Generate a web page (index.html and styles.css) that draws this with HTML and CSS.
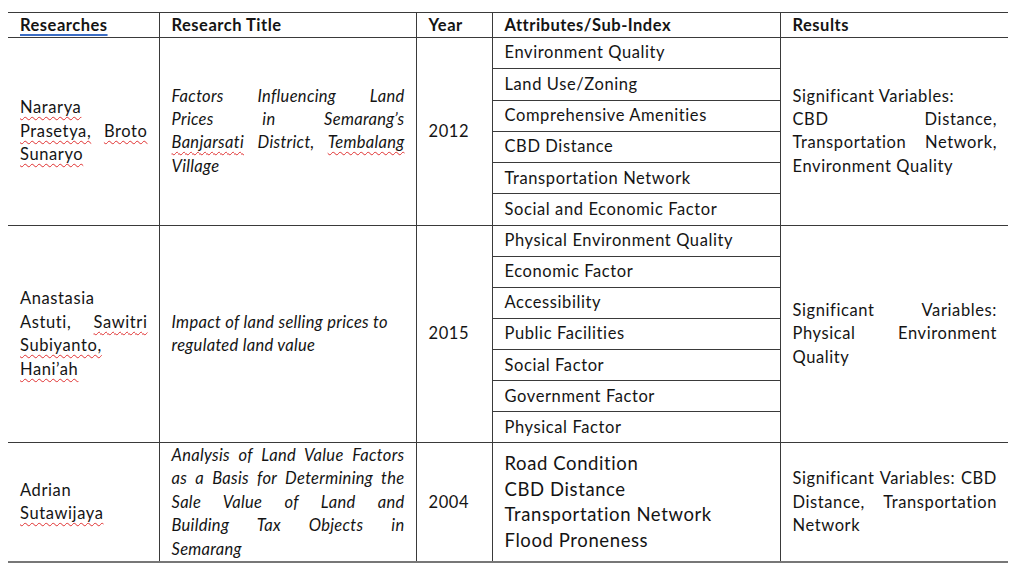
FILE: index.html
```html
<!DOCTYPE html>
<html lang="en">
<head>
<meta charset="utf-8">
<title>Land Value Research Table</title>
<link rel="stylesheet" href="styles.css">
</head>
<body>
<table class="research">
  <colgroup>
    <col class="c-name">
    <col class="c-title">
    <col class="c-year">
    <col class="c-attr">
    <col class="c-res">
  </colgroup>
  <thead>
    <tr class="head">
      <th class="first"><span class="grammar">Researches</span></th>
      <th>Research Title</th>
      <th>Year</th>
      <th>Attributes/Sub-Index</th>
      <th class="last">Results</th>
    </tr>
  </thead>
  <tbody>
    <tr class="sub r1">
      <td class="first" rowspan="6">
        <span class="ln end"><span class="spell">Nararya</span></span>
        <span class="ln"><span class="spell">Prasetya,</span> <span class="spell">Broto</span></span>
        <span class="ln end"><span class="spell">Sunaryo</span></span>
      </td>
      <td class="title" rowspan="6">
        <span class="ln">Factors Influencing Land</span>
        <span class="ln">Prices in Semarang’s</span>
        <span class="ln"><span class="spell">Banjarsati</span> District, <span class="spell">Tembalang</span></span>
        <span class="ln end">Village</span>
      </td>
      <td class="year" rowspan="6">2012</td>
      <td class="attr">Environment Quality</td>
      <td class="last" rowspan="6">
        <span class="ln end">Significant Variables:</span>
        <span class="ln">CBD Distance,</span>
        <span class="ln">Transportation Network,</span>
        <span class="ln end">Environment Quality</span>
      </td>
    </tr>
    <tr class="sub r1"><td class="attr">Land Use/Zoning</td></tr>
    <tr class="sub r1"><td class="attr">Comprehensive Amenities</td></tr>
    <tr class="sub r1"><td class="attr">CBD Distance</td></tr>
    <tr class="sub r1"><td class="attr">Transportation Network</td></tr>
    <tr class="sub r1"><td class="attr">Social and Economic Factor</td></tr>

    <tr class="sub r2">
      <td class="first" rowspan="7">
        <span class="ln end">Anastasia</span>
        <span class="ln">Astuti, <span class="spell">Sawitri</span></span>
        <span class="ln end"><span class="spell">Subiyanto,</span></span>
        <span class="ln end"><span class="spell">Hani’ah</span></span>
      </td>
      <td class="title" rowspan="7">
        <span class="ln end">Impact of land selling prices to</span>
        <span class="ln end">regulated land value</span>
      </td>
      <td class="year" rowspan="7">2015</td>
      <td class="attr">Physical Environment Quality</td>
      <td class="last" rowspan="7">
        <span class="ln">Significant Variables:</span>
        <span class="ln">Physical Environment</span>
        <span class="ln end">Quality</span>
      </td>
    </tr>
    <tr class="sub r2"><td class="attr">Economic Factor</td></tr>
    <tr class="sub r2"><td class="attr">Accessibility</td></tr>
    <tr class="sub r2"><td class="attr">Public Facilities</td></tr>
    <tr class="sub r2"><td class="attr">Social Factor</td></tr>
    <tr class="sub r2"><td class="attr">Government Factor</td></tr>
    <tr class="sub r2"><td class="attr">Physical Factor</td></tr>

    <tr class="r3">
      <td class="first">
        <span class="ln end">Adrian</span>
        <span class="ln end"><span class="spell">Sutawijaya</span></span>
      </td>
      <td class="title">
        <span class="ln">Analysis of Land Value Factors</span>
        <span class="ln">as a Basis for Determining the</span>
        <span class="ln">Sale Value of Land and</span>
        <span class="ln">Building Tax Objects in</span>
        <span class="ln end">Semarang</span>
      </td>
      <td class="year">2004</td>
      <td class="attr big">
        <span class="ln end">Road Condition</span>
        <span class="ln end">CBD Distance</span>
        <span class="ln end">Transportation Network</span>
        <span class="ln end">Flood Proneness</span>
      </td>
      <td class="last">
        <span class="ln">Significant Variables: CBD</span>
        <span class="ln">Distance, Transportation</span>
        <span class="ln end">Network</span>
      </td>
    </tr>
  </tbody>
</table>
</body>
</html>
```

FILE: styles.css
```css
html, body {
  margin: 0;
  padding: 0;
  background: #ffffff;
}

body {
  font-family: Lato, "Open Sans", sans-serif;
  color: #141414;
}

.research {
  margin: 12px 0 0 8px;
  width: 1000px;
  border-collapse: collapse;
  table-layout: fixed;
  font-size: 16.5px;
  line-height: 23.4px;
  letter-spacing: 0.6px;
}

.c-name { width: 151px; }
.c-title { width: 257px; }
.c-year { width: 76px; }
.c-attr { width: 288px; }
.c-res { width: 228px; }

.research th,
.research td {
  border: 1px solid #3a3a3a;
  padding: 0 11px 0 12px;
  vertical-align: middle;
  text-align: left;
}

.research .first { border-left: none; }
.research .last { border-right: none; }

.head th {
  height: 24px;
  font-weight: 700;
  line-height: 22px;
  letter-spacing: 0.5px;
}

.sub.r1 td { height: 30.3px; }
.sub.r2 td { height: 30.1px; }
.r3 td {
  height: 118px;
  border-bottom: 2px solid #777777;
}

.ln {
  display: block;
  text-align: justify;
  text-align-last: justify;
}

.ln.end {
  text-align: left;
  text-align-last: left;
}

.title {
  font-style: italic;
  letter-spacing: 0.3px;
}

.attr {
  white-space: nowrap;
}

.attr.big {
  font-size: 18.5px;
  line-height: 25.7px;
  letter-spacing: 0.6px;
}

.spell {
  text-decoration: underline wavy #e03030;
  text-decoration-thickness: 1px;
  text-underline-offset: 3px;
}

.grammar {
  text-decoration: underline solid #3a6cc4;
  text-decoration-thickness: 2px;
  text-underline-offset: 3px;
}
```
